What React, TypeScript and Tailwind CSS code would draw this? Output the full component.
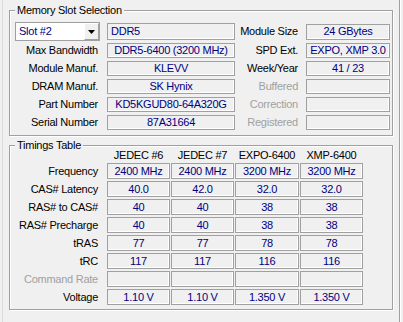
import React from "react";

const Field = ({
  children,
  w,
  h = "h-[15px]",
  align = "center",
}: {
  children?: React.ReactNode;
  w: string;
  h?: string;
  align?: "center" | "left";
}) => (
  <div
    className={`${w} ${h} shrink-0 border border-[#a0a0a0] shadow-[inset_-1px_-1px_0_#ffffff] flex items-center ${
      align === "center" ? "justify-center" : "justify-start pl-[3px]"
    } text-[#000080] whitespace-nowrap overflow-hidden leading-none`}
  >
    {children}
  </div>
);

const Label = ({ children, w, disabled, pr }: { children: React.ReactNode; w: string; disabled?: boolean; pr: string }) => (
  <div className={`${w} ${pr} shrink-0 text-right whitespace-nowrap leading-none ${disabled ? "text-[#a0a0a0]" : "text-black"}`}>
    {children}
  </div>
);

const Group = ({ title, h, children }: { title: string; h: string; children: React.ReactNode }) => (
  <div className={`relative w-[384px] ${h} border border-[#a0a0a0] shadow-[inset_1px_1px_0_#ffffff,1px_1px_0_#ffffff]`}>
    <div className="absolute left-[5px] -top-[7px] px-[2px] bg-[#f0f0f0] leading-[13px] text-black">{title}</div>
    {children}
  </div>
);

const rows1: [string, string, boolean, string, string, boolean][] = [
  ["Max Bandwidth", "DDR5-6400 (3200 MHz)", false, "SPD Ext.", "EXPO, XMP 3.0", false],
  ["Module Manuf.", "KLEVV", false, "Week/Year", "41 / 23", false],
  ["DRAM Manuf.", "SK Hynix", false, "Buffered", "", true],
  ["Part Number", "KD5KGUD80-64A320G", false, "Correction", "", true],
  ["Serial Number", "87A31664", false, "Registered", "", true],
];

const timings: [string, string[], boolean][] = [
  ["Frequency", ["2400 MHz", "2400 MHz", "3200 MHz", "3200 MHz"], false],
  ["CAS# Latency", ["40.0", "42.0", "32.0", "32.0"], false],
  ["RAS# to CAS#", ["40", "40", "38", "38"], false],
  ["RAS# Precharge", ["40", "40", "38", "38"], false],
  ["tRAS", ["77", "77", "78", "78"], false],
  ["tRC", ["117", "117", "116", "116"], false],
  ["Command Rate", ["", "", "", ""], true],
  ["Voltage", ["1.10 V", "1.10 V", "1.350 V", "1.350 V"], false],
];

const cellW = ["w-[63px]", "w-[63px]", "w-[64px]", "w-[63px]"];

export default function App() {
  return (
    <div
      className="w-[403px] h-[322px] bg-[#f0f0f0] overflow-hidden text-[11px] tracking-[-0.25px]"
      style={{ fontFamily: '"Liberation Sans", Arial, sans-serif' }}
    >
      <div className="ml-[2px] w-[398px] h-full border-l border-l-[#dadada] border-r border-r-[#a0a0a0] shadow-[1px_0_0_#ffffff] pl-[6px] pt-[10px] flex flex-col gap-[9px]">
        <Group title="Memory Slot Selection" h="h-[126px]">
          <div className="pt-[11px] pl-[5px] flex flex-col gap-[2px]">
            <div className="flex items-center h-[19px]">
              <div className="w-[85px] h-[19px] shrink-0 bg-white border border-[#a0a0a0] flex items-center justify-between">
                <span className="pl-[3px] text-[#000080] leading-none">Slot #2</span>
                <div className="w-[15px] h-[17px] bg-[#f0f0f0] border-t border-l border-white border-b border-r border-b-[#a0a0a0] border-r-[#a0a0a0] flex items-center justify-center">
                  <svg width="7" height="4" viewBox="0 0 7 4">
                    <path d="M0 0H7L3.5 4Z" fill="#000" />
                  </svg>
                </div>
              </div>
              <div className="ml-[7px]">
                <Field w="w-[128px]" h="h-[17px]" align="left">DDR5</Field>
              </div>
              <Label w="w-[71px]" pr="pr-[8px]">Module Size</Label>
              <Field w="w-[84px]" h="h-[16px]">24 GBytes</Field>
            </div>
            <div className="flex flex-col gap-[3px]">
              {rows1.map(([l1, v1, d1, l2, v2, d2]) => (
                <div key={l1} className="flex items-center h-[15px]">
                  <Label w="w-[85px]" pr="pr-[2px]" disabled={d1}>{l1}</Label>
                  <div className="ml-[7px]">
                    <Field w="w-[128px]">{v1}</Field>
                  </div>
                  <Label w="w-[71px]" pr="pr-[8px]" disabled={d2}>{l2}</Label>
                  <Field w="w-[84px]">{v2}</Field>
                </div>
              ))}
            </div>
          </div>
        </Group>
        <Group title="Timings Table" h="h-[165px]">
          <div className="pt-[2px] pl-[5px] flex flex-col">
            <div className="flex items-center h-[14px] mb-[1px]">
              <div className="w-[85px] shrink-0" />
              <div className="ml-[7px] flex gap-[1px]">
                {["JEDEC #6", "JEDEC #7", "EXPO-6400", "XMP-6400"].map((t, i) => (
                  <div key={t} className={`${cellW[i]} text-center leading-none whitespace-nowrap`}>{t}</div>
                ))}
              </div>
            </div>
            <div className="flex flex-col gap-[2px]">
              {timings.map(([l, vals, dis]) => (
                <div key={l} className="flex items-center h-[16px]">
                  <Label w="w-[85px]" pr="pr-[2px]" disabled={dis}>{l}</Label>
                  <div className="ml-[7px] flex gap-[1px]">
                    {vals.map((v, i) => (
                      <Field key={i} w={cellW[i]} h="h-[16px]">{v}</Field>
                    ))}
                  </div>
                </div>
              ))}
            </div>
          </div>
        </Group>
      </div>
    </div>
  );
}
